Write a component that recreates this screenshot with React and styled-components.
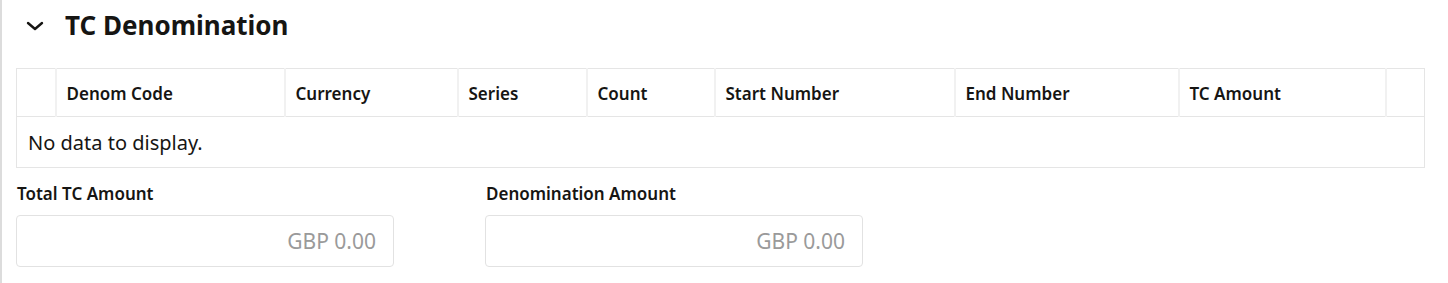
import React from 'react';
import styled, {createGlobalStyle} from 'styled-components';

const GlobalStyle = createGlobalStyle`
  html, body { margin: 0; padding: 0; background: #ffffff; }
  body { font-family: 'Noto Sans', 'Open Sans', sans-serif; color: #161513; }
`;

const columns = [
    {label: '', width: 39},
    {label: 'Denom Code', width: 229},
    {label: 'Currency', width: 173},
    {label: 'Series', width: 129},
    {label: 'Count', width: 128},
    {label: 'Start Number', width: 240},
    {label: 'End Number', width: 224},
    {label: 'TC Amount', width: 207},
    {label: '', width: 39},
];

const fields = [
    {label: 'Total TC Amount', value: 'GBP 0.00'},
    {label: 'Denomination Amount', value: 'GBP 0.00'},
];

export default () => {
    return (<>
        <GlobalStyle/>
        <Section>
            <Header>
                <Chevron viewBox="0 0 18 10" width="18" height="10">
                    <path d="M2 2 L9 8 L16 2" fill="none" stroke="#161513" strokeWidth="2.4" strokeLinecap="round" strokeLinejoin="round"/>
                </Chevron>
                <Title>TC Denomination</Title>
            </Header>
            <Table>
                <colgroup>
                    {columns.map((c, i) => <col key={i} style={{width: c.width}}/>)}
                </colgroup>
                <thead>
                    <tr>
                        {columns.map((c, i) => <HeadCell key={i} last={i === columns.length - 1}>{c.label}</HeadCell>)}
                    </tr>
                </thead>
                <tbody>
                    <tr>
                        <EmptyCell colSpan={columns.length}>No data to display.</EmptyCell>
                    </tr>
                </tbody>
            </Table>
            <FieldRow>
                {fields.map((f) => (
                    <Field key={f.label}>
                        <Label>{f.label}</Label>
                        <ReadOnlyInput>{f.value}</ReadOnlyInput>
                    </Field>
                ))}
            </FieldRow>
        </Section>
    </>);
}

const Section = styled.div`
  border-left: 2px solid #dcdcdc;
  padding: 0 22px 16px 14px;
  min-height: 283px;
  box-sizing: border-box;
`;

const Header = styled.div`
  display: flex; flex-direction: row;
  align-items: center;
  height: 50px;
  padding-left: 10px;
`;

const Chevron = styled.svg`
  display: block;
  margin-top: 2px;
`;

const Title = styled.h2`
  margin: 0 0 0 21px;
  font-size: 26px;
  font-weight: 700;
  line-height: 1;
  color: #161513;
`;

const Table = styled.table`
  margin-top: 18px;
  width: 1408px;
  table-layout: fixed;
  border-collapse: collapse;
  border: 1px solid #e5e5e5;
`;

const HeadCell = styled.th`
  box-sizing: border-box;
  height: 48px;
  padding: 2px 10px 0;
  text-align: left;
  font-size: 17px;
  font-weight: 600;
  color: #161513;
  border-bottom: 1px solid #e5e5e5;
  border-right: ${props => props.last ? 'none' : '2px solid #f1f1f1'};
  white-space: nowrap;
`;

const EmptyCell = styled.td`
  height: 50px;
  padding: 0 11px;
  font-size: 20px;
  color: #161513;
`;

const FieldRow = styled.div`
  display: flex; flex-direction: row;
  gap: 91px;
  margin-top: 14px;
`;

const Field = styled.div`
  display: flex; flex-direction: column;
  width: 378px;
`;

const Label = styled.div`
  font-size: 17px;
  font-weight: 600;
  line-height: 24px;
  padding-left: 1px;
  color: #161513;
`;

const ReadOnlyInput = styled.div`
  margin-top: 9px;
  height: 52px;
  box-sizing: border-box;
  border: 1px solid #e2e2e2;
  border-radius: 4px;
  display: flex;
  align-items: center;
  justify-content: flex-end;
  padding-right: 17px;
  font-size: 21px;
  color: #9a9a9a;
`;
